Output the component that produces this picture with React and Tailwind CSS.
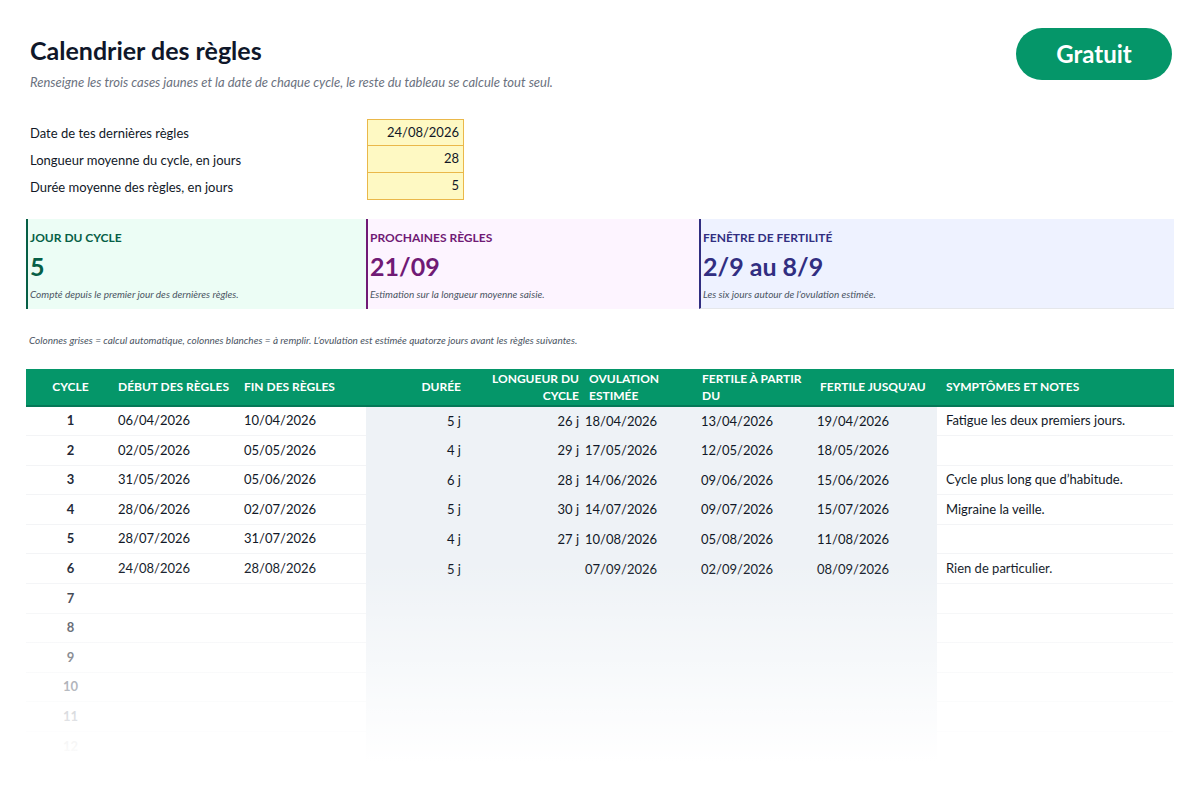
const rows = [
  ["1", "06/04/2026", "10/04/2026", "5 j", "26 j", "18/04/2026", "13/04/2026", "19/04/2026", "Fatigue les deux premiers jours."],
  ["2", "02/05/2026", "05/05/2026", "4 j", "29 j", "17/05/2026", "12/05/2026", "18/05/2026", ""],
  ["3", "31/05/2026", "05/06/2026", "6 j", "28 j", "14/06/2026", "09/06/2026", "15/06/2026", "Cycle plus long que d’habitude."],
  ["4", "28/06/2026", "02/07/2026", "5 j", "30 j", "14/07/2026", "09/07/2026", "15/07/2026", "Migraine la veille."],
  ["5", "28/07/2026", "31/07/2026", "4 j", "27 j", "10/08/2026", "05/08/2026", "11/08/2026", ""],
  ["6", "24/08/2026", "28/08/2026", "5 j", "", "07/09/2026", "02/09/2026", "08/09/2026", "Rien de particulier."],
  ["7", "", "", "", "", "", "", "", ""],
  ["8", "", "", "", "", "", "", "", ""],
  ["9", "", "", "", "", "", "", "", ""],
  ["10", "", "", "", "", "", "", "", ""],
  ["11", "", "", "", "", "", "", "", ""],
  ["12", "", "", "", "", "", "", "", ""],
];

const numColor = ["text-[#1f2937]", "text-[#1f2937]", "text-[#1f2937]", "text-[#1f2937]", "text-[#1f2937]", "text-[#1f2937]", "text-[#1f2937]", "text-[#1f2937]", "text-[#1f2937]", "text-[#374151]", "text-[#6b7280]", "text-[#a3a3a3]"];

const grid = "grid grid-cols-[89px_126px_125px_105px_110px_116px_118px_122px_236px]";

const App = () => {
  return (
    <div className="w-[1200px] h-[800px] bg-white overflow-hidden text-[#111827]" style={{ fontFamily: "Lato, 'Noto Sans', sans-serif" }}>
      <div className="flex justify-between items-start pl-[30px] pr-[28px] pt-[34px]">
        <div>
          <h1 className="text-[25px] font-bold text-[#0f172a] leading-[32px]">Calendrier des règles</h1>
          <p className="mt-[7px] text-[13px] italic text-[#6b7280]">Renseigne les trois cases jaunes et la date de chaque cycle, le reste du tableau se calcule tout seul.</p>
        </div>
        <div className="mt-[-6px] w-[156px] h-[52px] rounded-full bg-[#059669] text-white text-[24px] font-bold flex items-center justify-center">Gratuit</div>
      </div>

      <div className="mt-[26px] pl-[30px] flex flex-col">
        {[["Date de tes dernières règles", "24/08/2026"], ["Longueur moyenne du cycle, en jours", "28"], ["Durée moyenne des règles, en jours", "5"]].map(([l, v], i) => (
          <div key={i} className="flex items-center h-[27px]">
            <span className="w-[337px] text-[13px] pt-[4px]">{l}</span>
            <span className={"w-[97px] h-[27px] bg-[#fef9c3] border border-[#eab84a] text-right pr-[4px] text-[13px] leading-[25px] " + (i > 0 ? "border-t-0" : "")}>{v}</span>
          </div>
        ))}
      </div>

      <div className="mt-[19px] mx-[26px] flex h-[90px]">
        <div className="w-[340px] bg-[#ecfdf5] border-l-2 border-[#065f46] pl-[2px] pt-[10px] flex flex-col">
          <span className="text-[12px] font-bold text-[#065f46]">JOUR DU CYCLE</span>
          <span className="text-[25px] font-bold text-[#065f46] leading-[32px] mt-[3px]">5</span>
          <span className="text-[10px] italic text-[#4b5563] mt-[5px]">Compté depuis le premier jour des dernières règles.</span>
        </div>
        <div className="w-[333px] bg-[#fdf4ff] border-l-2 border-[#701a75] pl-[2px] pt-[10px] flex flex-col">
          <span className="text-[12px] font-bold text-[#701a75]">PROCHAINES RÈGLES</span>
          <span className="text-[25px] font-bold text-[#701a75] leading-[32px] mt-[3px]">21/09</span>
          <span className="text-[10px] italic text-[#4b5563] mt-[5px]">Estimation sur la longueur moyenne saisie.</span>
        </div>
        <div className="flex-1 bg-[#eef2ff] border-l-2 border-[#312e81] pl-[2px] pt-[10px] flex flex-col border-b border-b-[#e5e7eb]">
          <span className="text-[12px] font-bold text-[#312e81]">FENÊTRE DE FERTILITÉ</span>
          <span className="text-[25px] font-bold text-[#312e81] leading-[32px] mt-[3px]">2/9 au 8/9</span>
          <span className="text-[10px] italic text-[#4b5563] mt-[5px]">Les six jours autour de l’ovulation estimée.</span>
        </div>
      </div>

      <p className="mt-[24px] ml-[29px] text-[10px] italic text-[#4b5563]">Colonnes grises = calcul automatique, colonnes blanches = à remplir. L’ovulation est estimée quatorze jours avant les règles suivantes.</p>

      <div className="mt-[21px] mx-[26px]">
        <div className={grid + " h-[38px] bg-[#059669] text-white text-[12px] font-bold border-b-2 border-[#047857] items-center leading-[17px]"}>
          <span className="text-center">CYCLE</span>
          <span className="pl-[3px]">DÉBUT DES RÈGLES</span>
          <span className="pl-[3px]">FIN DES RÈGLES</span>
          <span className="text-right pr-[10px]">DURÉE</span>
          <span className="text-right pr-[2px]">LONGUEUR DU<br />CYCLE</span>
          <span className="pl-[8px]">OVULATION<br />ESTIMÉE</span>
          <span className="pl-[5px]">FERTILE À PARTIR<br />DU</span>
          <span className="pl-[5px]">FERTILE JUSQU'AU</span>
          <span className="pl-[9px]">SYMPTÔMES ET NOTES</span>
        </div>
        <div className="relative">
          {rows.map((r, i) => (
            <div key={i} className={grid + " h-[29.6px] items-center text-[13px]"}>
              <span className={"text-center font-bold h-full flex items-center justify-center border-b border-[#f3f4f6] " + numColor[i]}>{r[0]}</span>
              <span className="pl-[3px] h-full flex items-center border-b border-[#f3f4f6]">{r[1]}</span>
              <span className="pl-[3px] h-full flex items-center border-b border-[#f3f4f6]">{r[2]}</span>
              <span className="bg-[#eef2f6] h-full flex items-center justify-end pr-[10px]">{r[3]}</span>
              <span className="bg-[#eef2f6] h-full flex items-center justify-end pr-[2px]">{r[4]}</span>
              <span className="bg-[#eef2f6] h-full flex items-center pl-[4px]">{r[5]}</span>
              <span className="bg-[#eef2f6] h-full flex items-center pl-[4px]">{r[6]}</span>
              <span className="bg-[#eef2f6] h-full flex items-center pl-[2px]">{r[7]}</span>
              <span className="pl-[9px] h-full flex items-center border-b border-[#f3f4f6]">{r[8]}</span>
            </div>
          ))}
          <div className="absolute left-0 right-0 bottom-0 h-[200px] bg-gradient-to-b from-transparent to-white pointer-events-none"></div>
        </div>
      </div>
    </div>
  );
};

export default App;
